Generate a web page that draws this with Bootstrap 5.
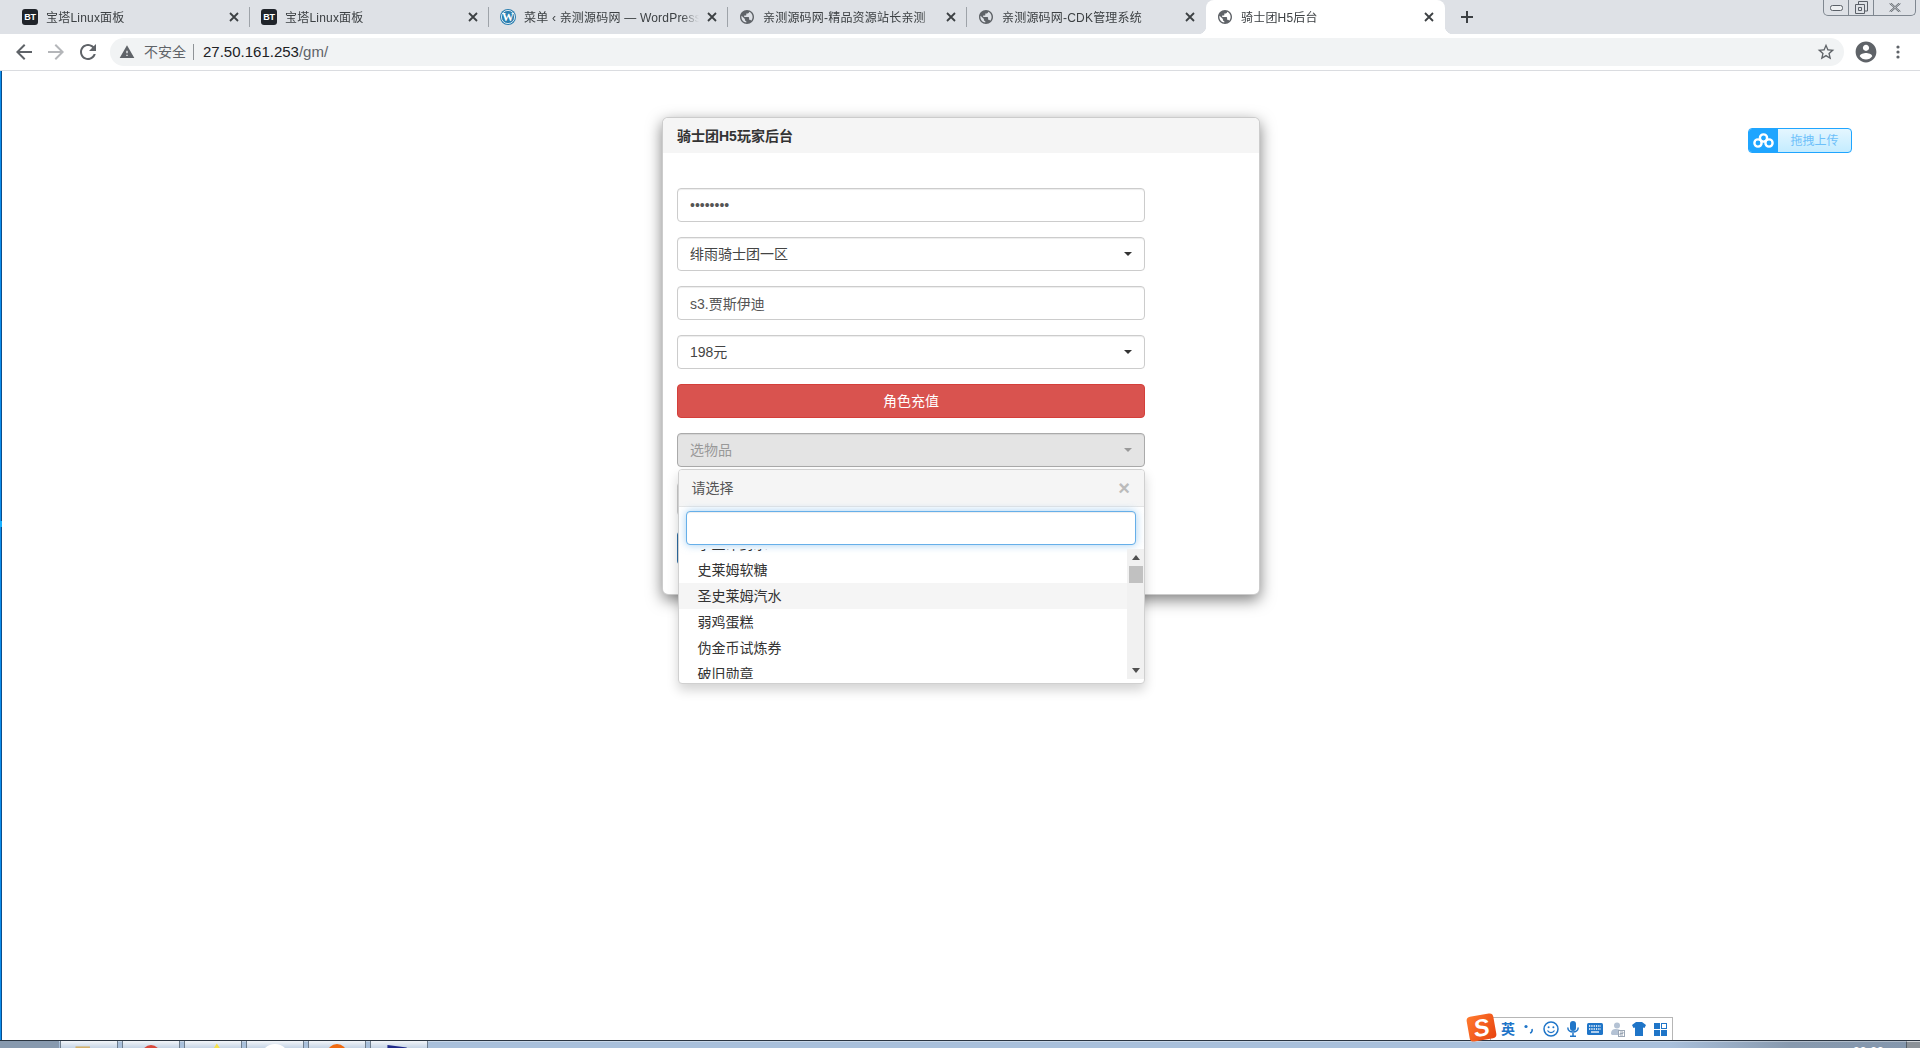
<!DOCTYPE html>
<html lang="zh-CN">
<head>
<meta charset="utf-8">
<title>骑士团H5后台</title>
<link href="https://cdn.jsdelivr.net/npm/bootstrap@5.3.0/dist/css/bootstrap.min.css" rel="stylesheet">
<style>
html,body{height:100%;overflow:hidden}
body{font-family:"Liberation Sans","Noto Sans CJK SC",sans-serif;font-size:14px;color:#333;background:#fff}
.shell{height:1048px}
/* tab strip */
.tabstrip{height:34px;background:#dee1e6;padding-left:11px;flex:none}
.tabitem{width:239px;height:34px;flex:none;position:relative;padding:0 8px 0 11px;font-size:12px;letter-spacing:.2px;color:#3c4043}
.tabitem.sep::after{content:"";position:absolute;right:0;top:7px;height:20px;width:1px;background:#9ea3a9}
.tabitem.on{background:#fff;border-radius:8px 8px 0 0}
.tabitem.on::before,.tabitem.on .flare{content:"";position:absolute;bottom:0;width:8px;height:8px}
.tabitem.on::before{left:-8px;background:radial-gradient(circle at 0 0,transparent 8px,#fff 8.5px)}
.tabitem.on .flare{right:-8px;background:radial-gradient(circle at 100% 0,transparent 8px,#fff 8.5px)}
.tabname{width:175px;margin-left:8px;padding-top:2px;white-space:nowrap;overflow:hidden;flex:none;-webkit-mask-image:linear-gradient(to right,#000 158px,transparent 175px);mask-image:linear-gradient(to right,#000 158px,transparent 175px)}
.tabclose,.favsvg{flex:none;display:block}
.favglobe{flex:none;display:block;margin:0 1px}
.tabclose{margin-left:5px}
.favbt{width:16px;height:16px;border-radius:3px;background:#20242a;color:#fff;font-size:9px;font-weight:700;line-height:16px;text-align:center;flex:none;letter-spacing:-.3px}
.newtab{margin-left:14px}
.winctl{position:absolute;right:4px;top:0;height:16px;width:93px;border:1px solid #7f8790;border-top:0;border-radius:0 0 5px 5px}
.winctl>span{border-right:1px solid #7f8790;height:100%}
.winctl>span:last-child{border-right:0}
/* toolbar */
.toolbar{height:37px;flex:none;background:#fff;border-bottom:1px solid #dadce0;padding:4px 0 4px 0;position:relative}
.navzone{width:110px;flex:none;padding-left:12px;gap:8px}
.omnibox{width:1734px;height:28px;background:#f1f3f4;border-radius:14px;padding-left:9px;flex:none;color:#5f6368}
.omni-warn{margin-right:9px}
.omni-sep{width:1px;height:16px;background:#8f9397;margin:0 9px 0 7px}
.urltext{font-size:15px}
.urlhost{color:#202124}
/* page */
.pagearea{flex:1 1 auto;padding-top:46px;position:relative;background:#fff;min-height:0}
.edgeline{position:absolute;left:0;top:0;bottom:0;width:2px;background:linear-gradient(to right,#0d8fee 50%,#0a4d8a 50%)}
.edgeglow{position:absolute;left:0;top:450px;width:2px;height:6px;background:#17b0ff}
.uploadbtn{position:absolute;left:1748px;top:57px;width:104px;height:25px;border:1px solid #1fa5ff;border-radius:4px;overflow:hidden;background:linear-gradient(#e4f6ff,#c4ecff);color:#6cc0fa;font-size:12px}
.uploadbtn .cloudbox{width:29px;height:100%;background:#1fa5ff;flex:none}
.gmcard{width:598px;height:478px;margin:0 0 0 662px;border:1px solid rgba(0,0,0,.2);border-radius:6px;box-shadow:0 5px 15px rgba(0,0,0,.5)}
.gmcard .card-header{height:35px;padding:1px 14px 0;background:#f5f5f5;border:0;border-radius:5px 5px 0 0;font-weight:700;color:#333;font-size:14px;line-height:35px}
.gmcard .card-body{padding:35px 14px 0 14px}
.gmform{width:468px;gap:15px}
.gmform .form-control,.gmform .form-select{height:34px;padding:6px 12px;font-size:14px;line-height:20px;border:1px solid #ccc;border-radius:4px;color:#555;box-shadow:inset 0 1px 1px rgba(0,0,0,.075)}
.gmform .form-select{color:#444;padding-right:24px;background-position:right 12px center;background-size:8px 4px;background-image:url("data:image/svg+xml,%3csvg xmlns='http://www.w3.org/2000/svg' viewBox='0 0 8 4'%3e%3cpath fill='%23333' d='M0 0h8L4 4z'/%3e%3c/svg%3e")}
.gmform .form-select:disabled{background-color:#e4e4e4;color:#999;border-color:#aaa;opacity:1;background-image:url("data:image/svg+xml,%3csvg xmlns='http://www.w3.org/2000/svg' viewBox='0 0 8 4'%3e%3cpath fill='%23999' d='M0 0h8L4 4z'/%3e%3c/svg%3e")}
.btn-charge{height:34px;padding:6px 12px;font-size:14px;line-height:20px;background:#d9534f;border:1px solid #d43f3a;color:#fff;border-radius:4px}
.btn-send{height:34px;background:#337ab7;border:1px solid #2e6da4;border-radius:4px}
.itempick{position:relative}
.itemmenu{position:absolute;display:block;left:.5px;top:36px;width:467.5px;height:215px;padding:0;margin:0;border:1px solid #d0d0d0;border-radius:4px;box-shadow:0 6px 12px rgba(0,0,0,.175);background:#fff;z-index:5;font-size:14px}
.itemhead{height:37px;background:#f5f5f5;border-bottom:1px solid #e5e5e5;padding:0 14px 0 13px;color:#555;border-radius:3px 3px 0 0}
.itemx{color:#bbb;font-weight:700;font-size:20px;line-height:1}
.itemsearch{padding:4px 8px 4px 7px}
.itemsearch .form-control{height:34px;border:1px solid #66afe9;box-shadow:inset 0 1px 1px rgba(0,0,0,.075),0 0 8px rgba(102,175,233,.6);border-radius:4px}
.itemscroll{height:130px}
.itemview{flex:1 1 auto;overflow:hidden;min-width:0}
.itemlist{margin-top:-18px}
.itemrow{height:26px;line-height:26px;padding-left:19px;color:#333;white-space:nowrap}
.itemrow.hov{background:#f5f5f5}
.fakebar{width:17px;flex:none;background:#f1f1f1}
.fakebar .arrowbox{height:17px;flex:none}
.fakebar .thumb{height:17px;width:14px;margin-left:1.5px;background:#c1c1c1;flex:none}
.thumbgap{flex:1}
/* taskbar */
.taskbar{height:8px;flex:none;border-top:1px solid #2a3440;overflow:hidden;position:relative;background:linear-gradient(to right,#a9c0db 0,#a9c0db 1670px,#8799ae 1790px,#8497ad 100%);box-shadow:inset 0 1px 0 rgba(255,255,255,.35)}
.startzone{width:59px;flex:none;background:#8799ae;height:100%}
.taskbtn{width:58px;height:100%;flex:none;margin-right:4px;background:linear-gradient(#f2f5f9,#c6d5e6);border-left:1px solid #6d7c8c;border-right:1px solid #6d7c8c;display:block;overflow:hidden}
.clock{position:absolute;left:1853px;top:4px;color:#fff;font-size:12px;line-height:14px;font-weight:700}
.showdesk{position:absolute;right:0;top:0;width:14px;height:100%;background:#8c9298;border-left:1px solid #555e68;border-top:1px solid #d0d4d8}
/* IME */
.imebar{position:absolute;left:1490px;top:1017px;width:183px;height:23px;background:#fff;border:1px solid #b6b6b6;border-bottom:0;z-index:9;padding-left:10px;color:#1f75c8}
.imelogo{position:absolute;left:-23px;top:-3px;width:27px;height:25px;background:linear-gradient(135deg,#ff7a2e,#e8430f);border-radius:4px;transform:rotate(-10deg);color:#fff;font:italic 700 24px/25px "Liberation Sans",sans-serif;text-align:center}
.imechar{font-weight:700;font-size:14px;line-height:1;width:15px;margin-right:8px}
</style>
</head>
<body>
<div class="shell d-flex flex-column position-relative">

  <div class="tabstrip d-flex align-items-center position-relative">
    <div class="tabitem sep d-flex align-items-center">
      <span class="favbt">BT</span><span class="tabname">宝塔Linux面板</span>
      <svg class="tabclose" width="16" height="16" viewBox="0 0 16 16"><path d="M4 4l8 8M12 4l-8 8" stroke="#3c4043" stroke-width="1.8"/></svg>
    </div>
    <div class="tabitem sep d-flex align-items-center">
      <span class="favbt">BT</span><span class="tabname">宝塔Linux面板</span>
      <svg class="tabclose" width="16" height="16" viewBox="0 0 16 16"><path d="M4 4l8 8M12 4l-8 8" stroke="#3c4043" stroke-width="1.8"/></svg>
    </div>
    <div class="tabitem sep d-flex align-items-center">
      <svg class="favsvg" width="16" height="16" viewBox="0 0 16 16"><circle cx="8" cy="8" r="8" fill="#2c7fb0"/><circle cx="8" cy="8" r="6.6" fill="none" stroke="#fff" stroke-width=".8"/><text x="8" y="12" text-anchor="middle" font-family="Liberation Serif" font-weight="700" font-size="12" fill="#fff">W</text></svg>
      <span class="tabname">菜单 ‹ 亲测源码网 — WordPress</span>
      <svg class="tabclose" width="16" height="16" viewBox="0 0 16 16"><path d="M4 4l8 8M12 4l-8 8" stroke="#3c4043" stroke-width="1.8"/></svg>
    </div>
    <div class="tabitem sep d-flex align-items-center">
      <svg class="favglobe" width="14" height="14" viewBox="2 2 20 20"><path fill="#5f6368" d="M12 2C6.48 2 2 6.48 2 12s4.48 10 10 10 10-4.48 10-10S17.52 2 12 2zm-1 17.93c-3.95-.49-7-3.85-7-7.93 0-.62.08-1.21.21-1.79L9 15v1c0 1.1.9 2 2 2v1.93zm6.9-2.54c-.26-.81-1-1.39-1.9-1.39h-1v-3c0-.55-.45-1-1-1H8v-2h2c.55 0 1-.45 1-1V7h2c1.1 0 2-.9 2-2v-.41c2.93 1.19 5 4.06 5 7.41 0 2.08-.8 3.97-2.1 5.39z"/></svg>
      <span class="tabname">亲测源码网-精品资源站长亲测</span>
      <svg class="tabclose" width="16" height="16" viewBox="0 0 16 16"><path d="M4 4l8 8M12 4l-8 8" stroke="#3c4043" stroke-width="1.8"/></svg>
    </div>
    <div class="tabitem d-flex align-items-center">
      <svg class="favglobe" width="14" height="14" viewBox="2 2 20 20"><path fill="#5f6368" d="M12 2C6.48 2 2 6.48 2 12s4.48 10 10 10 10-4.48 10-10S17.52 2 12 2zm-1 17.93c-3.95-.49-7-3.85-7-7.93 0-.62.08-1.21.21-1.79L9 15v1c0 1.1.9 2 2 2v1.93zm6.9-2.54c-.26-.81-1-1.39-1.9-1.39h-1v-3c0-.55-.45-1-1-1H8v-2h2c.55 0 1-.45 1-1V7h2c1.1 0 2-.9 2-2v-.41c2.93 1.19 5 4.06 5 7.41 0 2.08-.8 3.97-2.1 5.39z"/></svg>
      <span class="tabname">亲测源码网-CDK管理系统</span>
      <svg class="tabclose" width="16" height="16" viewBox="0 0 16 16"><path d="M4 4l8 8M12 4l-8 8" stroke="#3c4043" stroke-width="1.8"/></svg>
    </div>
    <div class="tabitem on d-flex align-items-center">
      <span class="flare"></span>
      <svg class="favglobe" width="14" height="14" viewBox="2 2 20 20"><path fill="#5f6368" d="M12 2C6.48 2 2 6.48 2 12s4.48 10 10 10 10-4.48 10-10S17.52 2 12 2zm-1 17.93c-3.95-.49-7-3.85-7-7.93 0-.62.08-1.21.21-1.79L9 15v1c0 1.1.9 2 2 2v1.93zm6.9-2.54c-.26-.81-1-1.39-1.9-1.39h-1v-3c0-.55-.45-1-1-1H8v-2h2c.55 0 1-.45 1-1V7h2c1.1 0 2-.9 2-2v-.41c2.93 1.19 5 4.06 5 7.41 0 2.08-.8 3.97-2.1 5.39z"/></svg>
      <span class="tabname">骑士团H5后台</span>
      <svg class="tabclose" width="16" height="16" viewBox="0 0 16 16"><path d="M4 4l8 8M12 4l-8 8" stroke="#3c4043" stroke-width="1.8"/></svg>
    </div>
    <svg class="newtab" width="16" height="16" viewBox="0 0 16 16"><path d="M8 2v12M2 8h12" stroke="#3c4043" stroke-width="2"/></svg>
    <div class="winctl d-flex">
      <span class="d-flex align-items-center justify-content-center" style="width:25px"><svg width="13" height="6" viewBox="0 0 13 6"><rect x=".5" y=".5" width="12" height="5" rx="2" fill="#eef0f2" stroke="#5a6068"/></svg></span>
      <span class="d-flex align-items-center justify-content-center" style="width:25px"><svg width="13" height="13" viewBox="0 0 13 13"><path d="M3.5 3V.5h9V10H10M.5 3.5h9v9h-9zM3.5 6.5h3v3h-3z" fill="none" stroke="#5a6068"/></svg></span>
      <span class="d-flex align-items-center justify-content-center flex-grow-1"><svg width="12" height="9" viewBox="0 0 12 9"><path d="M1 0l10 9M11 0L1 9" stroke="#5a6068" stroke-width="2"/><path d="M1 0l10 9M11 0L1 9" stroke="#eef0f2" stroke-width=".7"/></svg></span>
    </div>
  </div>

  <div class="toolbar d-flex align-items-center">
    <div class="navzone d-flex align-items-center">
      <svg width="24" height="24" viewBox="0 0 24 24"><path fill="#5f6368" d="M20 11H7.83l5.59-5.59L12 4l-8 8 8 8 1.41-1.41L7.83 13H20v-2z"/></svg>
      <svg width="24" height="24" viewBox="0 0 24 24"><path fill="#b4b6b9" d="M4 11h12.17l-5.59-5.59L12 4l8 8-8 8-1.41-1.41L16.17 13H4v-2z"/></svg>
      <svg width="24" height="24" viewBox="0 0 24 24"><path fill="#5f6368" d="M17.65 6.35C16.2 4.9 14.21 4 12 4c-4.42 0-7.99 3.58-7.99 8s3.57 8 7.99 8c3.73 0 6.84-2.55 7.73-6h-2.08c-.82 2.33-3.04 4-5.65 4-3.31 0-6-2.69-6-6s2.69-6 6-6c1.66 0 3.14.69 4.22 1.78L13 11h7V4l-2.35 2.35z"/></svg>
    </div>
    <div class="omnibox d-flex align-items-center">
      <svg class="omni-warn" width="16" height="16" viewBox="0 0 24 24"><path fill="#5f6368" d="M1 21h22L12 2 1 21zm12-3h-2v-2h2v2zm0-4h-2v-4h2v4z"/></svg>
      <span>不安全</span><span class="omni-sep"></span>
      <span class="urltext"><span class="urlhost">27.50.161.253</span>/gm/</span>
      <svg class="ms-auto" style="margin-right:8px" width="20" height="20" viewBox="0 0 24 24"><path fill="#5f6368" d="M22 9.24l-7.19-.62L12 2 9.19 8.63 2 9.24l5.46 4.73L5.82 21 12 17.27 18.18 21l-1.63-7.03L22 9.24zM12 15.4l-3.76 2.27 1-4.28-3.32-2.88 4.38-.38L12 6.1l1.71 4.04 4.38.38-3.32 2.88 1 4.28L12 15.4z"/></svg>
    </div>
    <svg style="margin-left:11px" width="22" height="22" viewBox="1.4 1.4 21.2 21.2"><path fill="#5f6368" d="M12 2C6.48 2 2 6.48 2 12s4.48 10 10 10 10-4.48 10-10S17.52 2 12 2zm0 3c1.66 0 3 1.34 3 3s-1.34 3-3 3-3-1.34-3-3 1.34-3 3-3zm0 14.2c-2.5 0-4.71-1.28-6-3.22.03-1.99 4-3.08 6-3.08 1.99 0 5.97 1.09 6 3.08-1.29 1.94-3.5 3.22-6 3.22z"/></svg>
    <svg style="margin-left:15px" width="12" height="16" viewBox="0 0 12 16"><circle cx="6" cy="3" r="1.6" fill="#5f6368"/><circle cx="6" cy="8" r="1.6" fill="#5f6368"/><circle cx="6" cy="13" r="1.6" fill="#5f6368"/></svg>
  </div>

  <main class="pagearea">
    <span class="edgeline"></span><span class="edgeglow"></span>

    <div class="uploadbtn d-flex align-items-center">
      <span class="cloudbox d-flex align-items-center justify-content-center">
        <svg width="21" height="15" viewBox="0 0 21 15"><g fill="none" stroke="#fff" stroke-width="2.4"><circle cx="10.5" cy="5" r="3.6"/><circle cx="5" cy="10" r="3.6"/><circle cx="16" cy="10" r="3.6"/></g></svg>
      </span>
      <span class="flex-grow-1 text-center">拖拽上传</span>
    </div>

    <div class="card gmcard">
      <div class="card-header">骑士团H5玩家后台</div>
      <div class="card-body">
        <form class="gmform d-flex flex-column">
          <input class="form-control" type="password" value="12345678" aria-label="密码">
          <select class="form-select" aria-label="区服"><option>绯雨骑士团一区</option></select>
          <input class="form-control" type="text" value="s3.贾斯伊迪" aria-label="角色">
          <select class="form-select" aria-label="金额"><option>198元</option></select>
          <button type="button" class="btn btn-charge">角色充值</button>
          <div class="itempick">
            <select class="form-select" disabled aria-label="物品"><option>选物品</option></select>
            <div class="dropdown-menu itemmenu">
              <div class="itemhead d-flex align-items-center justify-content-between"><span>请选择</span><span class="itemx">×</span></div>
              <div class="itemsearch"><input class="form-control" type="text" aria-label="搜索"></div>
              <div class="itemscroll d-flex">
                <div class="itemview">
                  <div class="itemlist">
                    <div class="itemrow">小生命药水</div>
                    <div class="itemrow">史莱姆软糖</div>
                    <div class="itemrow hov">圣史莱姆汽水</div>
                    <div class="itemrow">弱鸡蛋糕</div>
                    <div class="itemrow">伪金币试炼券</div>
                    <div class="itemrow">破旧勋章</div>
                  </div>
                </div>
                <div class="fakebar d-flex flex-column">
                  <div class="arrowbox d-flex align-items-center justify-content-center"><svg width="8" height="5" viewBox="0 0 8 5"><path d="M4 0l4 5H0z" fill="#505050"/></svg></div>
                  <div class="thumb"></div>
                  <div class="thumbgap"></div>
                  <div class="arrowbox d-flex align-items-center justify-content-center"><svg width="8" height="5" viewBox="0 0 8 5"><path d="M0 0h8L4 5z" fill="#505050"/></svg></div>
                </div>
              </div>
            </div>
          </div>
          <select class="form-select" aria-label="数量"></select>
          <button type="button" class="btn btn-send" aria-label="发送"></button>
        </form>
      </div>
    </div>
  </main>

  <div class="imebar d-flex align-items-center">
    <span class="imelogo">S</span>
    <span class="imechar">英</span>
    <svg width="10" height="10" viewBox="0 0 10 10" style="margin-right:9px"><circle cx="2" cy="2.5" r="1.6" fill="#1f75c8"/><path d="M8 5c.6 2-.5 3.6-2 4" fill="none" stroke="#1f75c8" stroke-width="1.6"/></svg>
    <svg width="16" height="16" viewBox="0 0 16 16" style="margin-right:8px"><circle cx="8" cy="8" r="7" fill="none" stroke="#1f75c8" stroke-width="1.5"/><circle cx="5.6" cy="6.3" r="1" fill="#1f75c8"/><circle cx="10.4" cy="6.3" r="1" fill="#1f75c8"/><path d="M4.5 9.5c1.5 2.8 5.5 2.8 7 0" fill="none" stroke="#1f75c8" stroke-width="1.2"/></svg>
    <svg width="12" height="16" viewBox="0 0 12 16" style="margin-right:8px"><rect x="3" y="0" width="6" height="10" rx="3" fill="#1f75c8"/><path d="M.8 6.5c0 6 10.400 6 10.400 0M6 12v3M3 15.300h6" fill="none" stroke="#1f75c8" stroke-width="1.5"/></svg>
    <svg width="16" height="12" viewBox="0 0 16 12" style="margin-right:8px"><rect width="16" height="12" rx="1.500" fill="#1f75c8"/><path d="M2 3h12M2 6h12" stroke="#fff" stroke-width="1.300" stroke-dasharray="1.300 1"/><path d="M4 9h8" stroke="#fff" stroke-width="1.300"/></svg>
    <svg width="14" height="15" viewBox="0 0 14 15" style="margin-right:7px"><circle cx="6" cy="3.500" r="3" fill="#b4c2d4"/><path d="M0 12c0-4 2-5 5-5s5 1 5 3v3H1z" fill="#b4c2d4"/><rect x="7.500" y="8.500" width="6" height="6" fill="#fff" stroke="#9aa6b5"/><path d="M9 10h3v1.500H9v1.500h3" fill="none" stroke="#9aa6b5"/></svg>
    <svg width="14" height="14" viewBox="0 0 14 14" style="margin-right:8px"><path d="M4 0h6l4 3-1.500 3L11 5.500V14H3V5.500L1.500 6 0 3z" fill="#1f75c8"/></svg>
    <svg width="13" height="13" viewBox="0 0 13 13"><rect width="6" height="6" fill="#1f75c8"/><rect x="7" y="7" width="6" height="6" fill="#1f75c8"/><rect y="7" width="6" height="6" fill="#1f75c8"/><rect x="7.500" y=".5" width="5" height="5" fill="#fff" stroke="#1f75c8"/></svg>
  </div>

  <footer class="taskbar d-flex">
    <div class="startzone" style="margin-right:1px"><svg width="59" height="7" viewBox="0 0 59 7"><circle cx="28" cy="14" r="14" fill="#9bb2cc" stroke="#2a5a8a" stroke-width="1"/></svg></div>
    <svg class="taskbtn" viewBox="0 0 58 7" width="58" height="7"><rect x="15" y="5.500" width="15" height="3" fill="#d4b06a"/></svg>
    <svg class="taskbtn" viewBox="0 0 58 7" width="58" height="7"><circle cx="29" cy="13.500" r="9.500" fill="#d9483b"/></svg>
    <svg class="taskbtn" viewBox="0 0 58 7" width="58" height="7"><path d="M33 2.500l4 6H29z" fill="#f7e34b"/></svg>
    <svg class="taskbtn" viewBox="0 0 58 7" width="58" height="7"><circle cx="29" cy="18" r="15" fill="#fff"/></svg>
    <svg class="taskbtn" viewBox="0 0 58 7" width="58" height="7"><circle cx="29" cy="13" r="10" fill="#f06a10"/></svg>
    <svg class="taskbtn" viewBox="0 0 58 7" width="58" height="7"><path d="M17 4l20 2.500V9H17z" fill="#1f2a8a"/></svg>
    <span class="clock">22:22</span>
    <span class="showdesk"></span>
  </footer>
</div>
<script src="https://cdn.jsdelivr.net/npm/bootstrap@5.3.0/dist/js/bootstrap.bundle.min.js"></script>
</body>
</html>
